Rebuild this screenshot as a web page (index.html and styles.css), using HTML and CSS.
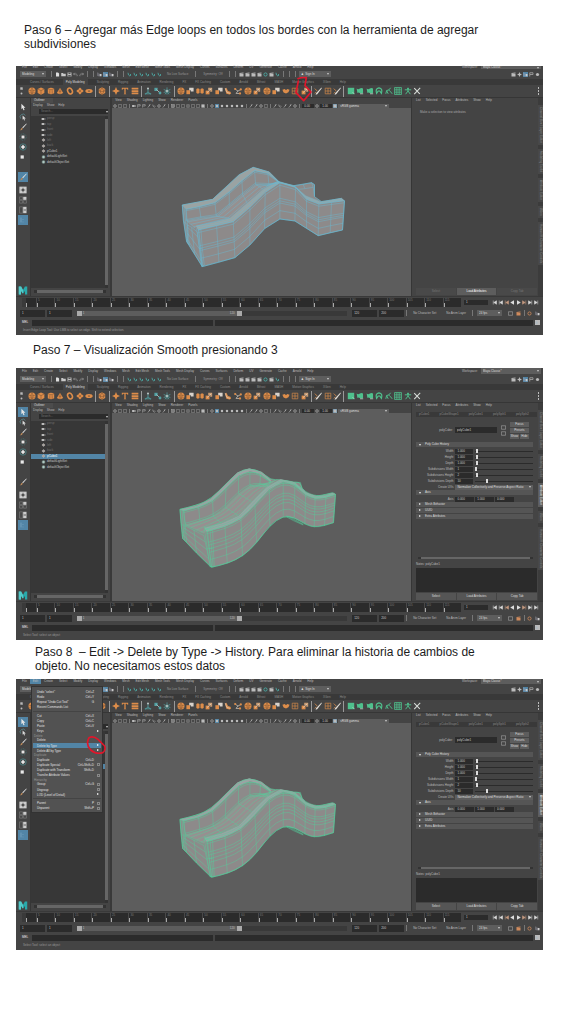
FILE: index.html
```html
<!DOCTYPE html>
<html lang="es">
<head>
  <meta charset="UTF-8">
  <meta name="viewport" content="width=device-width, initial-scale=1">
  <title>Modelado de un puente - Pasos 6 a 8</title>
  <link rel="stylesheet" href="styles.css">
</head>
<body>
  <!-- icon sprite -->
  <svg class="sprite" aria-hidden="true">
    <symbol id="sphere" viewBox="0 0 10 10"><circle cx="5" cy="5" r="4.4" fill="currentColor"/><path d="M1 4q4 2 8 0M1.500 7q3.500 1.500 7 0M5 .6q-3 4 0 8.800M5 .6q3 4 0 8.800" fill="none" stroke="#6b4a31" stroke-width=".5"/></symbol>
    <symbol id="cube" viewBox="0 0 10 10"><path d="M5 .5l4.200 2v5L5 9.600.8 7.500v-5z" fill="currentColor"/><path d="M.8 2.500L5 4.500l4.200-2M5 4.500v5" fill="none" stroke="#6b4a31" stroke-width=".6"/></symbol>
    <symbol id="cylinder" viewBox="0 0 10 10"><path d="M1 2.200q4-2.800 8 0v5.600q-4 2.800-8 0z" fill="currentColor"/><path d="M1 2.200q4 2.600 8 0M3.500 4v5M6.500 4v5" fill="none" stroke="#6b4a31" stroke-width=".6"/></symbol>
    <symbol id="cone" viewBox="0 0 10 10"><path d="M5 .8l4 6.800q-4 2.800-8 0z" fill="currentColor"/><path d="M5 1v8M3 5q2 1 4 0" fill="none" stroke="#6b4a31" stroke-width=".6"/></symbol>
    <symbol id="torus" viewBox="0 0 10 10"><ellipse cx="5" cy="5" rx="2.800" ry="3.800" transform="rotate(-25 5 5)" fill="none" stroke="currentColor" stroke-width="2"/></symbol>
    <symbol id="plane" viewBox="0 0 10 10"><path d="M5 .6L9.600 5 5 9.400.4 5z" fill="currentColor"/><path d="M2.700 2.700l4.600 4.600M7.300 2.700L2.700 7.300" stroke="#6b4a31" stroke-width=".6"/></symbol>
    <symbol id="disk" viewBox="0 0 10 10"><ellipse cx="5" cy="5" rx="4.600" ry="2.600" fill="currentColor"/><ellipse cx="5" cy="5" rx="1.500" ry=".7" fill="#5b4a3e"/></symbol>
    <symbol id="platonic" viewBox="0 0 10 10"><path d="M5 .4l4 2.200v4.800L5 9.600 1 7.400V2.600z" fill="currentColor"/><path d="M5 .4L2.500 5.500h5zM2.500 5.500L5 9.600l2.500-4.100M1 2.600l1.500 2.900M9 2.600L7.500 5.500" fill="none" stroke="#6b4a31" stroke-width=".6"/></symbol>
    <symbol id="star" viewBox="0 0 10 10"><path d="M5 0l1.500 3.500L10 5 6.500 6.500 5 10 3.500 6.500 0 5l3.500-1.500z" fill="currentColor"/></symbol>
    <symbol id="type" viewBox="0 0 10 10"><path d="M1 1h8v2.500h-.9L7.500 2.200H5.800v6.300l1 .5H3.200l1-.5V2.200H2.500L1.900 3.500H1z" fill="currentColor"/></symbol>
    <symbol id="layers" viewBox="0 0 10 10"><path d="M.8 1h8.400v2.200H.8zM.8 4h8.400v2.200H.8zM.8 7h8.400v2.200H.8z" fill="currentColor"/></symbol>
    <symbol id="figure" viewBox="0 0 10 10"><circle cx="5" cy="2" r="1.300" fill="#b8c2c2"/><path d="M5 3v3.500M5 6.200L1.500 9M5 6.200L8.500 9M1 8.500h8" fill="none" stroke="currentColor" stroke-width="1"/></symbol>
    <symbol id="joints" viewBox="0 0 10 10"><rect x=".5" y="1" width="4" height="4" fill="currentColor"/><path d="M3 3l5 5" stroke="#b8c2c2" stroke-width="1"/><circle cx="7.500" cy="7.500" r="1.800" fill="currentColor"/></symbol>
    <symbol id="burst" viewBox="0 0 10 10"><path d="M5 .5v9M.8 3l8.400 4M.8 7l8.400-4M2.500 9.200L5 5l2.500 4.200" fill="none" stroke="currentColor" stroke-width=".9"/><circle cx="5" cy="5" r="1.600" fill="#aab6b4"/></symbol>
    <symbol id="combine" viewBox="0 0 10 10"><path d="M.5 4h4.500v5H.5z" fill="currentColor"/><path d="M4 1h5.500v4.500H6V4H4z" fill="#d8d2cb"/></symbol>
    <symbol id="separate" viewBox="0 0 10 10"><path d="M.4 2.500l2-1 2 1v5l-2 1-2-1zM5.600 2.500l2-1 2 1v5l-2 1-2-1z" fill="currentColor"/></symbol>
    <symbol id="extrude" viewBox="0 0 10 10"><path d="M.8 4.500h4.800v4.700H.8z" fill="currentColor"/><path d="M4 1h5v5H6.500V3.700H4z" fill="#c89b72"/><path d="M2.500 7L7.800 2.200" stroke="#e8e0d8" stroke-width=".8"/></symbol>
    <symbol id="bevel" viewBox="0 0 10 10"><path d="M1 2l2-1 2 4 3 1 1 2-2 1.500-4-1z" fill="currentColor"/><path d="M1.500 1.500l2 5 4 1.500" fill="none" stroke="#d8d2cb" stroke-width=".7"/></symbol>
    <symbol id="bridge" viewBox="0 0 10 10"><path d="M1 2.500l4 2.500 4-2M5 5L2.500 8l6 .3" fill="none" stroke="#d0c8c0" stroke-width=".9"/><circle cx="1.500" cy="2.500" r="1.400" fill="currentColor"/><circle cx="8.500" cy="3" r="1.400" fill="currentColor"/><circle cx="7.500" cy="8" r="1.400" fill="currentColor"/></symbol>
    <symbol id="leaf" viewBox="0 0 10 10"><path d="M.5 3.500l3-1L5 4l1.500-1.500 3 1L8 6.500 5 8 2 7z" fill="currentColor"/></symbol>
    <symbol id="grid" viewBox="0 0 10 10"><path d="M1.500 1.500h7v7h-7zM5 1.500v7M1.500 5h7" fill="none" stroke="currentColor" stroke-width=".8"/></symbol>
    <symbol id="knife" viewBox="0 0 10 10"><path d="M1 2l3 3M1 8l2-2" stroke="currentColor" stroke-width="1"/><path d="M9.300.7l.5 1L4 9l-2 .6.600-1.800z" fill="#e2ddd6"/></symbol>
    <symbol id="tile" viewBox="0 0 10 10"><rect x="1" y="1" width="8" height="8" fill="currentColor"/><path d="M7 6.500L9.500 9" stroke="#d5e0d8" stroke-width=".8"/></symbol>
    <symbol id="wave" viewBox="0 0 10 10"><path d="M.8 2q2 1.500 4 0t4 0v5.500q-2 1.500-4 0t-3 0z" fill="currentColor"/><path d="M5 8.500h4" stroke="#d5e0d8" stroke-width=".8"/></symbol>
    <symbol id="tripod" viewBox="0 0 10 10"><path d="M2 8q-2-6 3-7 5 1 3 7L6 5H4z" fill="none" stroke="currentColor" stroke-width="1.500"/></symbol>
    <symbol id="curve" viewBox="0 0 10 10"><path d="M1 8.500l1-4 3-1 2-2.500M5 4l2 2 2 2.500M2 4.500l2 4" fill="none" stroke="currentColor" stroke-width="1.200"/></symbol>
    <symbol id="weave" viewBox="0 0 10 10"><rect x=".8" y=".8" width="8.400" height="8.400" fill="none" stroke="currentColor"/><path d="M3 1v8M5 1v8M7 1v8M1 3h8M1 5h8M1 7h8" stroke="currentColor" stroke-width=".7"/></symbol>
    <symbol id="runner" viewBox="0 0 10 10"><path d="M1 3.500h8M5 1v4M5 5L2 9M5 5l3 4" fill="none" stroke="currentColor" stroke-width="1.200"/><circle cx="5" cy="2" r="1.200" fill="currentColor"/></symbol>
    <symbol id="cross" viewBox="0 0 10 10"><path d="M1.500 1.500l7 7M9 1L1.500 9" stroke="#d8ddd9" stroke-width="1.300"/></symbol>
    <symbol id="arrow" viewBox="0 0 10 10"><path d="M3 .8l5 5H5.800l1.200 2.800-1.400.6-1.200-2.800L3 7.800z" fill="#e6e6e6"/></symbol>
    <symbol id="lasso" viewBox="0 0 10 10"><path d="M2 7q-2-3 1-5t5 1" fill="none" stroke="#5f9aa0" stroke-width=".8"/><path d="M4.500 3l4 4H6.800l.6 2-1 .3-.8-2-1.100 1z" fill="#ddd"/></symbol>
    <symbol id="brush" viewBox="0 0 10 10"><path d="M9.200.6l.4.8L5 6.500 4 5.600z" fill="#e2e2e2"/><path d="M4.200 6q-2 0-2 2L.8 9q3 .6 4-2.200z" fill="currentColor"/></symbol>
    <symbol id="move" viewBox="0 0 10 10"><circle cx="5" cy="5" r="4" fill="none" stroke="#477f83" stroke-width=".7" stroke-dasharray="2 1"/><rect x="3.200" y="3.200" width="3.600" height="3.600" fill="#e4e4e4"/></symbol>
    <symbol id="rotate" viewBox="0 0 10 10"><circle cx="5" cy="5" r="4" fill="none" stroke="#4a8b8f" stroke-width=".9"/><path d="M5 2.300L7.700 5 5 7.700 2.300 5z" fill="#e8e8e8"/></symbol>
    <symbol id="scale" viewBox="0 0 10 10"><rect x="2" y="3" width="4" height="4" fill="#e8e8e8"/></symbol>
    <symbol id="single" viewBox="0 0 10 10"><rect x=".5" y=".8" width="9" height="8.400" fill="#ccc"/><path d="M5 2.200v5.600M2.200 5h5.600" stroke="#444" stroke-width="1"/><circle cx="5" cy="5" r="1.300" fill="#444"/></symbol>
    <symbol id="quad" viewBox="0 0 10 10"><path d="M.7 1h3.800v3.500H.7zM.7 5.500h3.800V9H.7zM5.500 5.500h3.800V9H5.500z" fill="#484848" stroke="#999" stroke-width=".5"/><path d="M5.300 1h4v3.800h-4z" fill="#ccc"/></symbol>
    <symbol id="split" viewBox="0 0 10 10"><path d="M.7 1h3.800v8H.7z" fill="#484848" stroke="#999" stroke-width=".5"/><path d="M5.200 1h4.200v8H5.200z" fill="#ccc"/><path d="M5.800 5h3M2 5h1.500" stroke="#444" stroke-width="1"/></symbol>
    <symbol id="list" viewBox="0 0 10 10"><path d="M2.500 2v6M5 4v1M5 7v1" stroke="#8eb6d0" stroke-width=".7"/></symbol>
    <symbol id="logo" viewBox="0 0 10 10"><path d="M.3.600h2.600L5 4.400 7.100.6h2.600v8.800H7.200V5.300L5.600 8H4.400L2.800 5.300v4.100H.3z" fill="#29a9ab"/><path d="M.3.600h2.600L5 4.400V8h-.6L2.800 5.300v4.100H.3z" fill="#53c9c8"/></symbol>
    <symbol id="file" viewBox="0 0 10 10"><path d="M2 .8h4l2.200 2.200v6.200H2z" fill="#ddd"/></symbol>
    <symbol id="folder" viewBox="0 0 10 10"><path d="M.5 2h3.500l1 1.500h4.500v5h-9z" fill="#c9c9c9"/></symbol>
    <symbol id="save" viewBox="0 0 10 10"><path d="M1 1h8v8H1z" fill="#bbb"/><path d="M3 1.500h4v2.500H3zM2.500 6h5v3h-5z" fill="#555"/></symbol>
    <symbol id="undo" viewBox="0 0 10 10"><path d="M3.500 1.500L1 4l2.500 2.500M1 4h5.500q3 1 1.500 4.500" fill="none" stroke="#aaa" stroke-width="1.200"/></symbol>
    <symbol id="redo" viewBox="0 0 10 10"><path d="M6.500 1.500L9 4 6.500 6.500M9 4H3.500Q.5 5 2 8.500" fill="none" stroke="#aaa" stroke-width="1.200"/></symbol>
    <symbol id="magnet" viewBox="0 0 10 10"><path d="M2 1.500l1 4.500q3 4 5 0L6 4" fill="none" stroke="currentColor" stroke-width="1.500"/></symbol>
    <symbol id="nodes" viewBox="0 0 10 10"><path d="M1.500 1v6.500h5M2 4l6 1" fill="none" stroke="#aab" stroke-width="1"/><rect x="5.500" y="4" width="3.500" height="4.500" fill="#ccc"/></symbol>
    <symbol id="clap" viewBox="0 0 10 10"><path d="M1 3.500h8V9H1zM1 2l8-1v1.500L1 3.500z" fill="currentColor"/></symbol>
    <symbol id="ring" viewBox="0 0 10 10"><circle cx="5" cy="5" r="3.200" fill="none" stroke="currentColor" stroke-width="1.600"/></symbol>
    <symbol id="dot" viewBox="0 0 10 10"><circle cx="5" cy="5" r="3.200" fill="currentColor"/></symbol>
    <symbol id="frame" viewBox="0 0 10 10"><path d="M.8 1.500h8.400v7H.8z" fill="none" stroke="currentColor" stroke-width="1"/></symbol>
    <symbol id="camera" viewBox="0 0 10 10"><path d="M.3 2.500h6v5h-6zM6.500 4.500L9.500 3v4L6.500 5.500z" fill="currentColor"/></symbol>
    <symbol id="flag" viewBox="0 0 10 10"><path d="M1.500 9V1.500h6.500v3.500H2" fill="none" stroke="currentColor" stroke-width="1.300"/></symbol>
    <symbol id="pen" viewBox="0 0 10 10"><path d="M8.500 1L2 9M6 1v4" stroke="currentColor" stroke-width="1.500"/></symbol>
    <symbol id="set" viewBox="0 0 10 10"><circle cx="5" cy="5" r="4.500" fill="#7d9690"/><circle cx="5" cy="5" r="2.200" fill="#b9cbc6"/></symbol>
    <symbol id="play" viewBox="0 0 10 10"><path d="M2 .5L9.500 5 2 9.500z" fill="currentColor"/></symbol>
    <symbol id="back" viewBox="0 0 10 10"><path d="M8 .5L.5 5 8 9.500z" fill="currentColor"/></symbol>
    <symbol id="next" viewBox="0 0 10 10"><path d="M1 1.500L6.500 5 1 8.500zM7.500 1v8" fill="currentColor" stroke="currentColor" stroke-width="1"/></symbol>
    <symbol id="prev" viewBox="0 0 10 10"><path d="M9 1.500L3.500 5 9 8.500zM2.500 1v8" fill="currentColor" stroke="currentColor" stroke-width="1"/></symbol>
  </svg>

  <main>
    <h2 class="step">Paso 6 – Agregar más Edge loops en todos los bordes con la herramienta de agregar subdivisiones</h2>
    <div class="maya" data-step="loops"></div>

    <h2 class="step step-smooth">Paso 7 – Visualización Smooth presionando 3</h2>
    <div class="maya" data-step="smooth"></div>

    <h2 class="step step-history">Paso 8&nbsp; – Edit -&gt; Delete by Type -&gt; History. Para eliminar la historia de cambios de objeto. No necesitamos estos datos</h2>
    <div class="maya" data-step="history"></div>
  </main>

  <script src="script.js"></script>
</body>
</html>
```

FILE: styles.css
```css
* { box-sizing: border-box; }
body { margin: 0; background: #fff; color: #1c1c1c; font-family: "Liberation Sans", Arial, sans-serif; }
main { padding: 23px 33px 72px 16px; }
ul { margin: 0; padding: 0; list-style: none; }
svg { display: block; }
.sprite { display: none; }

.step { margin: 0 24px 15px 8px; font-size: 12px; line-height: 14px; font-weight: 400; }
.step-smooth { margin: 8px 0 11px 17px; }
.step-history { margin: 5px 40px 6px 19px; }

/* application window */
.maya { position: relative; background: #444; color: #bdbdbd; font: 3px/5px "Liberation Sans", Arial, sans-serif; }
.maya button, .maya input, .maya select, .maya textarea {
  display: block; min-width: 0; margin: 0; padding: 0; border: 0; border-radius: 0;
  background: none; color: inherit; font: inherit; appearance: none;
}
.maya input, .maya textarea { background: #2b2b2b; padding: 0 2px; color: #c8c8c8; }
.maya textarea { resize: none; }
.maya select { background: #5d5d5d; padding: 0 2px; color: #ddd; }
.maya label { display: flex; align-items: center; }
.ic { width: 5px; height: 5px; flex: none; color: #bbb; }
.sep { width: 1px; height: 6px; background: #777; flex: none; }
.drop { position: relative; }
.drop::after { content: ""; position: absolute; right: 2px; top: 50%; margin-top: -1px; border: 1px solid transparent; border-top: 2px solid #ccc; pointer-events: none; }
.drop select { width: 100%; height: 6px; }
.maya .on { background: #5285a6; }

.menubar { display: flex; align-items: center; justify-content: space-between; height: 6px; }
.is-loops .menubar { height: 3px; line-height: 3px; }
.is-loops .menubar select { height: 3px; }
.is-history .menubar { height: 5px; }
.is-history .menubar select { height: 5px; }
.menubar nav { display: flex; align-items: center; padding-left: 3px; }
.menubar nav button { padding: 0 3px; }
.menubar .workspace { width: 15%; margin-right: 2px; gap: 3px; }
.workspace .drop { flex: 1; }

.status { display: flex; align-items: center; gap: 1px; height: 10px; padding: 0 3px 0 4px; }
.status .sep { margin: 0 2px; }
.status .mode { width: 5%; margin-right: 2px; }
.status .grow { flex: 1; }
.status .signin { width: 6%; }
.status .teal { color: #4db6b0; }
.note { padding: 0 4px; color: #999; white-space: nowrap; }

.tabs { display: flex; gap: 9px; height: 6px; padding-left: 14px; background: #393939; }
.tabs button { color: #8a8a8a; }
.tabs .active { background: #444; color: #ddd; padding: 0 3px; }
.shelf { display: flex; align-items: center; height: 13px; border-bottom: 1px solid #363636; }
.shelf-side { width: 11px; display: grid; justify-items: center; }
.shelf-side .ic { width: 3px; }
.icons { display: flex; align-items: center; width: 75%; color: #dd8d4a; }
.icons button { position: relative; flex: 5; }
.icons .ic { width: 8px; height: 8px; margin: auto; color: inherit; }
.icons .gap { flex: 2; }
.icons .gap::before { content: ""; display: block; width: 1px; height: 11px; margin: auto; background: #999; }
.icons .teal { color: #52a3a5; }
.icons .green { color: #4fc08d; }
.more { margin-left: auto; padding-right: 3px; }
.more i { display: block; width: 1px; height: 2px; margin: 1px; background: #bbb; }
.ink { position: absolute; fill: none; stroke: #e0162b; stroke-linejoin: round; stroke-linecap: round; pointer-events: none; z-index: 2; }
.ink-shelf { width: 18px; height: 26px; left: -6px; top: -11px; }
.ink-menu { width: 20px; height: 19px; right: -5px; top: -7px; }

.work { display: grid; grid-template-columns: 14px 15.6% 1fr 24.1% 5px; height: 198px; }

.toolbox { display: flex; flex-direction: column; padding: 4px 2px 0; }
.toolbox button { height: 10px; padding: 1px; }
.toolbox .ic { width: 8px; height: 8px; color: #b98759; }
.toolbox .last { margin-top: 10px; }
.toolbox .layouts { margin-top: 3px; }
.toolbox .logo { width: 10px; height: 9px; margin: auto 0 1px; }

.outliner { display: flex; flex-direction: column; border-left: 1px solid #363636; border-right: 2px solid #393939; min-width: 0; }
.outliner .title { align-self: flex-start; padding: 0 8px 0 3px; background: #4c4c4c; color: #ddd; }
.row-menu { display: flex; gap: 4px; padding-left: 2px; }
.search { height: 6px; padding: 0 2px 0 8px; margin: 1px 0; }
.search input { width: 100%; height: 5px; }
.tree { flex: 1; display: flex; margin-right: 2px; background: #373737; }
.tree ul { flex: 1; display: grid; grid-template-rows: repeat(9, 1fr); height: 49px; color: #6f6f6f; }
.tree li { display: flex; align-items: center; gap: 1px; padding-left: 10px; }
.tree .bright { color: #c8c8c8; }
.tree .on { color: #fff; }
.tree .ic { height: 4px; }
.bar-v { width: 3px; background: #666; border: solid #333; border-width: 3px 0; }
.bar-h { height: 3px; margin: 2px 4px 3px 3px; background: #666; border: solid #333; border-width: 0 3px; }

.viewport { display: flex; flex-direction: column; background: #5d5d5d; min-width: 0; }
.panel-menu { display: flex; gap: 5px; padding-left: 3px; background: #444; }
.panel-tools { display: flex; align-items: center; gap: 1px; height: 5px; padding-left: 1px; background: #444; }
.panel-tools .ic { width: 4px; height: 4px; }
.panel-tools .sep { height: 4px; margin: 0 1px; }
.panel-tools input { width: 12px; height: 4px; line-height: 4px; }
.panel-tools .drop { width: 17%; }
.panel-tools select { height: 4px; line-height: 4px; }
.mesh { flex: 1; width: 100%; min-height: 0; }

.attrs { display: flex; flex-direction: column; padding: 0 1px 1px 4px; border-left: 1px solid #363636; min-width: 0; }
.attrs .row-menu { gap: 5px; padding-left: 0; }
.message { margin: 7px 4px; color: #aaa; }
.node-tabs { display: flex; justify-content: space-between; margin-top: 4px; padding: 0 8px 0 3px; background: #393939; color: #888; }
.node { display: flex; align-items: center; height: 20px; margin: 3px 0 2px; padding-right: 8px; gap: 2px; }
.node label { flex: 1; justify-content: flex-end; gap: 2px; }
.node input { width: 52%; height: 6px; }
.node .pair { display: grid; gap: 1px; margin: 0 2px; }
.node .acts { display: grid; grid-template-columns: 1fr 1fr; gap: 1px; width: 17%; }
.node .acts button { background: #5d5d5d; color: #ddd; text-align: center; }
.node .acts .wide { grid-column: 1 / 3; }
.attrs .section { position: relative; height: 5px; margin: 0 4px 1px 0; padding-left: 9px; background: #555; color: #ddd; text-align: left; }
.section::before { content: ""; position: absolute; left: 3px; top: 2px; border: 1px solid transparent; border-top: 2px solid #eee; }
.section.closed::before { top: 1px; border: 1px solid transparent; border-left: 2px solid #eee; }
.field { display: grid; grid-template-columns: 32% 15% 1fr; gap: 2px; height: 6px; align-items: center; padding-right: 4px; }
.maya .field label { display: contents; }
.field span { text-align: right; white-space: nowrap; }
.field input { width: 100%; height: 5px; }
.field .slider { height: 1px; padding: 0; background: #2b2b2b; overflow: visible; }
.field .slider::-webkit-slider-thumb { appearance: none; width: 2px; height: 4px; background: #ddd; }
.field .drop { grid-column: 2 / 4; }
.field .drop select { height: 5px; }
.field .trio { grid-column: 2 / 4; display: grid; grid-template-columns: repeat(3, 1fr); gap: 1px; width: 75%; }
.fill { flex: 1; }
.attrs .bar-h { height: 2px; margin: 0 4px 3px 2px; flex: none; }
.maya .notes { display: block; }
.notes textarea { width: 100%; height: 24px; margin-top: 1px; }
.foot { display: grid; grid-template-columns: repeat(3, 1fr); gap: 1px; margin-top: 1px; }
.foot button { height: 7px; background: #555; color: #ddd; text-align: center; }
.is-loops .foot button { background: #494949; color: #777; }
.is-loops .foot .lit { background: #5d5d5d; color: #fff; }

.side { display: flex; flex-direction: column; gap: 4px; padding-top: 7px; background: #3c3c3c; color: #888; overflow: hidden; }
.side button { writing-mode: vertical-rl; width: 5px; background: #484848; padding: 2px 0; white-space: nowrap; }
.side .active { background: #5d5d5d; color: #eee; }

.timeline { display: flex; align-items: center; height: 12px; padding: 0 4px 0 6px; border-top: 1px solid #393939; }
.ticks { flex: 1; display: flex; height: 9px; background: #2b2b2b; color: #777; }
.ticks span { flex: 1; border-left: 1px solid #484848; padding-left: 1px; line-height: 4px;
  background: linear-gradient(#aaa, #aaa) 0 100% / 1px 4px no-repeat; }
.ticks .now { flex: 0 0 14px; border-left: 4px solid #3a3a3a; }
.timeline input { width: 24px; height: 5px; margin: 0 4px 0 3px; }
.play { display: flex; gap: 1px; }
.play .ic { color: #ddd; }
.play .key { color: #c79a80; }

.range { display: flex; align-items: center; gap: 2px; height: 10px; padding: 0 2px 0 4px; }
.range input { width: 25px; height: 7px; }
.track { flex: 1; height: 5px; margin: 0 3px; background: #393939; }
.track div { display: flex; justify-content: space-between; align-items: center; width: 61%; height: 5px; background: #5d5d5d; }
.track b { width: 5px; height: 5px; background: #aaa; }
.track em { margin: auto 2px auto auto; font-style: normal; }
.range .note { color: #bbb; }
.range .drop { width: 25px; margin: 0 4px 0 2px; }
.range .ic { margin-right: 1px; }
.range .orange { color: #cf8a5c; }

.command { display: flex; align-items: center; gap: 2px; height: 9px; padding: 0 3px 0 2px; }
.command label { flex: 38 0 0; }
.command label span { width: 14px; text-align: center; color: #eee; }
.command input { flex: 1; height: 6px; }
.command .output { flex: 61 0 0; }
.command .ic { background: #bbb; }
.help { height: 8px; padding: 1px 7px; color: #999; }

/* Edit menu */
.edit-menu { position: absolute; z-index: 1; left: 15px; top: 7px; width: 72px; height: 127px; padding: 2px 1px 1px;
  display: flex; flex-direction: column; background: #525252; border: 1px solid #333; color: #e2e2e2; line-height: 4px; }
.edit-menu li { flex: 11 0 0; min-height: 0; display: flex; align-items: center; }
.edit-menu li.head { flex-grow: 8; color: #999; padding-left: 1px; }
.edit-menu li.line { flex-grow: 7; }
.edit-menu li.line::before { content: ""; flex: 1; height: 1px; background: #444; }
.edit-menu button { position: relative; flex: 1; height: 5px; display: flex; align-items: center; padding: 0 2px 0 4px; white-space: nowrap; }
.edit-menu kbd { margin-left: auto; margin-right: 5px; font: inherit; }
.edit-menu .opt { position: absolute; right: 1px; top: 1px; width: 3px; height: 3px; border: 1px solid #888; }
.edit-menu .sub { position: absolute; right: 1px; top: 1px; border: 1px solid transparent; border-left: 2px solid #fff; }
```

FILE: script.js
```js
const icon = (id, cls = '') => `<svg class="ic ${cls}" aria-hidden="true"><use href="#${id}"/></svg>`;
const buttons = names => names.map(n => `<button>${n}</button>`).join('');
const sep = '<span class="sep"></span>';
const select = (label, value) => `<div class="drop"><select aria-label="${label}"><option>${value}</option></select></div>`;

const menus = ['File', 'Edit', 'Create', 'Select', 'Modify', 'Display', 'Windows', 'Mesh', 'Edit Mesh', 'Mesh Tools',
  'Mesh Display', 'Curves', 'Surfaces', 'Deform', 'UV', 'Generate', 'Cache', 'Arnold', 'Help'];

const shelfTabs = ['Curves / Surfaces', 'Poly Modeling', 'Sculpting', 'Rigging', 'Animation', 'Rendering', 'FX', 'FX Caching',
  'Custom', 'Arnold', 'Bifrost', 'MASH', 'Motion Graphics', 'XGen', 'Help'];

const shelf = [
  ['', 'sphere cube cylinder cone torus plane disk'],
  ['', 'platonic'],
  ['', 'star type layers'],
  ['teal', 'figure joints burst'],
  ['', 'sphere combine separate extrude combine bevel bridge sphere extrude sphere combine leaf grid extrude'],
  ['', 'knife grid knife'],
  ['green', 'tile wave wave tripod curve weave runner cross']
];

const nodes = [['camera', 'persp'], ['camera', 'top'], ['camera', 'front'], ['camera', 'side'], ['plane', 'left'],
  ['plane', 'back'], ['plane', 'pCube1'], ['set', 'defaultLightSet'], ['set', 'defaultObjectSet']];

const editMenu = [
  ['Undo "select"', 'Ctrl+Z'], ['Redo', 'Ctrl+Y'], ['Repeat "Undo Cut Tool"', 'G'], ['Recent Commands List'], '-',
  ['Cut', 'Ctrl+X'], ['Copy', 'Ctrl+C'], ['Paste', 'Ctrl+V'], ['Keys', '', 'sub'], 'Delete',
  ['Delete'], ['Delete by Type', '', 'sub'], ['Delete All by Type', '', 'sub'], 'Duplicate',
  ['Duplicate', 'Ctrl+D'], ['Duplicate Special', 'Ctrl+Shift+D', 'opt'], ['Duplicate with Transform', 'Shift+D'],
  ['Transfer Attribute Values', '', 'opt'], 'Hierarchy',
  ['Group', 'Ctrl+G', 'opt'], ['Ungroup', '', 'opt'], ['LOD (Level of Detail)', '', 'sub'], '-',
  ['Parent', 'P', 'opt'], ['Unparent', 'Shift+P', 'opt']
];

// each surface is a strip between two edges, cut by loops at the given fractions
const meshes = {
  hard: {
    line: '#69b9d2',
    outline: [[37,165],[128,148],[208,74],[250,52],[298,66],[330,98],[372,107],[425,98],[434,104],[434,140],[455,155],[515,145],[524,153],
      [518,240],[445,257],[375,213],[330,207],[285,235],[240,285],[195,323],[97,350],[50,275],[40,210]],
    strips: [
      { a: [[85,240],[140,227],[190,215],[240,172],[286,127],[330,98],[377,112],[410,148],[447,162],[485,157],[524,152]],
        b: [[97,350],[147,337],[195,323],[240,285],[284,236],[330,207],[375,213],[410,235],[445,257],[481,248],[518,240]], cuts: [0,.07,.43,.5,.56,.77,1], ribs: 1 },
      { a: [[78,228],[132,217],[180,205],[232,160],[280,118],[325,94],[372,107],[408,138],[452,155],[485,150],[515,145]],
        b: [[85,240],[140,227],[190,215],[240,172],[286,127],[330,98],[377,112],[410,148],[447,162],[485,157],[524,152]], cuts: [0,.5,1], ribs: 0 },
      { a: [[48,178],[88,170],[135,158],[178,126],[216,92],[254,62],[294,70],[328,97]],
        b: [[50,212],[93,204],[139,198],[178,166],[218,133],[257,103],[297,104],[320,100]], cuts: [0,.12,.9,1], ribs: 1 },
      { a: [[37,165],[82,157],[128,148],[168,112],[208,74],[250,52],[298,66],[330,98]],
        b: [[48,178],[88,170],[135,158],[178,126],[216,92],[254,62],[294,70],[328,97]], cuts: [0,1], ribs: 0 },
      { a: [[50,212],[139,198],[218,133],[257,103],[290,108]],
        b: [[75,234],[180,205],[232,160],[280,118],[325,94]], cuts: [.15,.5,.85], ribs: 1 },
      { a: [[37,165],[42,215],[50,275]], b: [[48,178],[53,225],[58,285]], cuts: [0,.5,1], ribs: 1 },
      { a: [[53,225],[65,232],[82,246]], b: [[52,275],[74,312],[97,350]], cuts: [0,.15,.5,.85,1], ribs: 1 },
      { a: [[80,236],[88,295],[95,350]], b: [[93,240],[97,295],[103,345]], cuts: [0,.5,1], ribs: 1 },
      { a: [[372,107],[400,103],[425,98],[434,104]], b: [[385,118],[405,116],[430,112],[434,140]], cuts: [0,1], ribs: 1 }
    ]
  },
  smooth: {
    line: '#54cf9c',
    outline: [[30,163],[85,150],[125,130],[165,90],[205,50],[238,40],[275,50],[303,75],[330,73],[375,82],[392,82],[395,100],[418,120],[445,124],[490,112],[497,118],[497,118],
      [491,203],[491,203],[440,217],[410,210],[375,188],[340,182],[300,210],[260,265],[220,303],[175,325],[125,337],[125,337],[80,295],[38,250],[38,250],[33,205]],
    strips: [
      { a: [[110,230],[165,215],[213,192],[255,150],[298,103],[340,80],[375,90],[407,120],[436,131],[468,128],[497,118]],
        b: [[125,337],[172,325],[218,304],[260,262],[300,212],[340,182],[373,187],[405,208],[433,217],[464,213],[490,203]], cuts: [0,.06,.3,.38,.48,.58,.78,1], ribs: 1 },
      { a: [[103,218],[155,205],[206,182],[246,140],[290,95],[332,73],[375,82],[408,112],[440,123],[468,121],[488,113]],
        b: [[110,230],[165,215],[213,192],[255,150],[298,103],[340,80],[375,90],[407,120],[436,131],[468,128],[497,118]], cuts: [0,.5,1], ribs: 0 },
      { a: [[40,168],[86,157],[128,138],[168,100],[206,62],[240,49],[272,57],[302,80]],
        b: [[46,210],[90,198],[130,184],[166,157],[206,116],[240,92],[270,87],[295,92]], cuts: [0,.12,.88,1], ribs: 1 },
      { a: [[30,163],[80,152],[122,132],[163,92],[203,52],[238,40],[275,50],[303,75]],
        b: [[40,168],[86,157],[128,138],[168,100],[206,62],[240,49],[272,57],[302,80]], cuts: [0,1], ribs: 0 },
      { a: [[46,210],[130,184],[166,157],[206,116],[240,92],[280,88]],
        b: [[102,235],[155,205],[206,182],[246,140],[290,95],[320,75]], cuts: [.1,.3,.6,.85], ribs: 1 },
      { a: [[30,163],[35,210],[38,250]], b: [[42,168],[46,210],[50,262]], cuts: [0,.5,1], ribs: 1 },
      { a: [[44,212],[72,225],[102,242]], b: [[38,250],[80,295],[122,336]], cuts: [0,.2,.45,.75,1], ribs: 1 },
      { a: [[103,218],[112,280],[120,335]], b: [[128,228],[130,280],[133,334]], cuts: [0,.35,.7,1], ribs: 1 },
      { a: [[350,182],[370,190],[400,208]], b: [[350,186],[368,197],[400,210]], cuts: [0,.5,1], ribs: 0 },
      { a: [[375,82],[392,82]], b: [[380,96],[395,99]], cuts: [0,1], ribs: 1 }
    ]
  }
};

function polyline(pts, smooth) {
  let d = `M${pts[0]}`;
  if (!smooth) return d + pts.slice(1).map(p => `L${p}`).join('');
  for (let i = 1; i < pts.length - 1; i++) {
    const end = i === pts.length - 2 ? pts[i + 1] : [(pts[i][0] + pts[i + 1][0]) / 2, (pts[i][1] + pts[i + 1][1]) / 2];
    d += `Q${pts[i]} ${end}`;
  }
  return pts.length === 2 ? d + `L${pts[1]}` : d;
}

function mesh(name) {
  const { line, outline, strips } = meshes[name];
  const smooth = name === 'smooth';
  let wires = '';
  strips.forEach(({ a, b, cuts, ribs }) => {
    cuts.forEach(t => {
      const pts = a.map((p, i) => [p[0] + (b[i][0] - p[0]) * t, p[1] + (b[i][1] - p[1]) * t]);
      wires += polyline(pts, smooth);
    });
    if (ribs) a.forEach((p, i) => { wires += `M${p}L${b[i]}`; });
  });
  const face = (s, color) => `<path d="${polyline(s.a.concat([...s.b].reverse()), false)}Z" fill="${color}"/>`;
  return `<svg class="mesh" viewBox="-174 -126 897 564" role="img" aria-label="pCube1">
    <path d="${polyline(outline, smooth)}Z" fill="#8d8a8a" stroke="${line}" stroke-width="2"/>
    ${face(strips[4], '#969090')}${face(strips[1], '#9aa3a3')}${face(strips[3], '#9aa3a3')}
    <path d="${wires}" fill="none" stroke="${line}" stroke-width="2" stroke-opacity=".65"/>
  </svg>`;
}

function shelfIcons(step) {
  return shelf.map(([cls, ids], g) => ids.split(' ').map((id, i) => {
    const ink = step === 'loops' && g === 4 && i === 13
      ? '<svg class="ink ink-shelf" viewBox="0 0 54 78"><path d="M12 8q10-5 25-3l-4 24 18 19-22 26L6 50l7-35" stroke-width="5"/></svg>' : '';
    return `<button class="${cls}" aria-label="${id}">${icon(id)}${ink}</button>`;
  }).join('')).join('<span class="gap"></span>');
}

function editItems() {
  return editMenu.map(item => {
    if (item === '-') return '<li class="line"></li>';
    if (typeof item === 'string') return `<li class="head">${item}</li>`;
    const [name, key = '', mark] = item;
    const hit = name === 'Delete by Type';
    const ink = hit ? '<svg class="ink ink-menu" viewBox="0 0 60 57"><path d="M9 5Q22-1 36 10l20 20q4 14-6 20-20 6-36-8Q-2 25 9 5z" stroke-width="5"/></svg>' : '';
    return `<li><button class="${hit ? 'on' : ''}">${name}<kbd>${key}</kbd>${mark ? `<i class="${mark}"></i>` : ''}${ink}</button></li>`;
  }).join('');
}

function attributeEditor(step) {
  const head = `<div class="row-menu">${buttons(['List', 'Selected', 'Focus', 'Attributes', 'Show', 'Help'])}</div>`;
  const foot = '<div class="foot"><button>Select</button><button class="lit">Load Attributes</button><button>Copy Tab</button></div>';
  if (step === 'loops') {
    return `${head}<p class="message">Make a selection to view attributes</p><div class="fill"></div>${foot}`;
  }
  const rows = [['Width', '1.000', 1], ['Height', '1.000', 1], ['Depth', '1.000', 1],
    ['Subdivisions Width', '1', 0], ['Subdivisions Height', '2', 2], ['Subdivisions Depth', '10', 19]];
  return `${head}
    <div class="node-tabs">${buttons(['pCube1', 'pCubeShape1', 'polyCube1', 'polySplit1', 'polySplit2'])}</div>
    <div class="node">
      <label>polyCube: <input value="polyCube1"></label>
      <div class="pair">${icon('frame')}${icon('frame')}</div>
      <div class="acts"><button class="wide">Focus</button><button class="wide">Presets</button><button>Show</button><button>Hide</button></div>
    </div>
    <button class="section">Poly Cube History</button>
    ${rows.map(([n, v, p]) => `<div class="field"><label><span>${n}</span><input value="${v}"></label><input class="slider" type="range" value="${p}" aria-label="${n}"></div>`).join('')}
    <div class="field"><span>Create UVs</span>${select('Create UVs', 'Normalize Collectively and Preserve Aspect Ratio')}</div>
    <button class="section">Axis</button>
    <div class="field"><span>Axis</span><div class="trio"><input value="0.000" aria-label="Axis X"><input value="1.000" aria-label="Axis Y"><input value="0.000" aria-label="Axis Z"></div></div>
    <button class="section closed">Mesh Behavior</button>
    <button class="section closed">UUID</button>
    <button class="section closed">Extra Attributes</button>
    <div class="fill"></div>
    <div class="bar-h"></div>
    <label class="notes">Notes: polyCube1<textarea></textarea></label>
    ${foot}`;
}

function render(el) {
  const step = el.dataset.step;
  const picked = step !== 'loops';
  el.classList.add('is-' + step);
  const panelIcons = 'ring frame frame | camera flag flag pen magnet ring pen | weave frame frame grid frame frame tile | ring * dot dot dot dot dot | pen pen ring frame | pen magnet pen pen ring |';

  el.innerHTML = `
    <div class="menubar">
      <nav>${menus.map(m => `<button class="${step === 'history' && m === 'Edit' ? 'on' : ''}">${m}</button>`).join('')}</nav>
      <label class="workspace">Workspace: <span class="drop"><select><option>Maya Classic*</option></select></span></label>
    </div>
    ${step === 'history' ? `<ul class="edit-menu">${editItems()}</ul>` : ''}
    <div class="status">
      <div class="mode">${select('Menu set', 'Modeling')}</div>${sep}
      ${['file', 'folder', 'save', 'undo', 'redo'].map(i => icon(i)).join('')}${sep}${sep}
      ${icon('nodes')}${icon('nodes', 'on')}${icon('nodes')}${sep}${sep}
      ${icon('magnet', 'teal').repeat(6)}<span class="note">No Live Surface</span>${sep}
      <span class="note">Symmetry: Off</span>${sep}${sep}
      ${icon('clap').repeat(4)}${icon('ring', 'teal')}${icon('clap')}${icon('magnet', 'teal')}${sep}${sep}${sep}
      <div class="signin">${select('Account', '♟ Sign In')}</div>
      <span class="grow"></span>
      ${icon('clap')}${icon('star')}${icon('nodes', 'on')}${icon('flag')}${icon('dot')}
    </div>
    <div class="tabs">${shelfTabs.map(t => `<button class="${t === 'Poly Modeling' ? 'active' : ''}">${t}</button>`).join('')}</div>
    <div class="shelf">
      <div class="shelf-side">${icon('tile')}${icon('dot')}</div>
      <div class="icons">${shelfIcons(step)}</div>
      <div class="more"><i></i><i></i><i></i></div>
    </div>
    <div class="work">
      <div class="toolbox">
        ${['arrow', 'lasso', 'brush', 'move', 'rotate', 'scale'].map((t, i) => `<button class="${picked && i === 0 ? 'on' : ''}" aria-label="${t}">${icon(t)}</button>`).join('')}
        <button class="last ${picked ? '' : 'on'}" aria-label="last tool">${icon('brush')}</button>
        <button class="layouts" aria-label="single view">${icon('single')}</button>
        <button aria-label="four views">${icon('quad')}</button>
        <button aria-label="split view">${icon('split')}</button>
        <button class="on" aria-label="outliner view">${icon('list')}</button>
        ${icon('logo', 'logo')}
      </div>
      <div class="outliner">
        <span class="title">Outliner</span>
        <div class="row-menu">${buttons(['Display', 'Show', 'Help'])}</div>
        <div class="search drop"><input placeholder="Search..." aria-label="Search"></div>
        <div class="tree">
          <ul>${nodes.map(([i, n], k) => `<li class="${k > 5 ? 'bright' : ''} ${picked && n === 'pCube1' ? 'on' : ''}">${icon(i)}${n}</li>`).join('')}</ul>
          <div class="bar-v"></div>
        </div>
        <div class="bar-h"></div>
      </div>
      <div class="viewport">
        <div class="panel-menu">${buttons(['View', 'Shading', 'Lighting', 'Show', 'Renderer', 'Panels'])}</div>
        <div class="panel-tools">
          ${panelIcons.split(' ').map(i => i === '|' ? sep : i === '*' ? icon('dot', 'on') : icon(i)).join('')}
          <input value="0.00" aria-label="Exposure">${icon('ring')}<input value="1.00" aria-label="Gamma">${icon('tile', 'on')}
          ${select('View transform', 'sRGB gamma')}
        </div>
        ${mesh(picked ? 'smooth' : 'hard')}
      </div>
      <div class="attrs">${attributeEditor(step)}</div>
      <div class="side"><button>Channel Box / Layer Editor</button><button>Modeling Toolkit</button><button class="${picked ? 'active' : ''}">Attribute Editor</button><button>XGen</button><button>Human IK Character Controls</button></div>
    </div>
    <div class="timeline">
      <div class="ticks"><span class="now"></span>${Array.from({ length: 23 }, (_, i) => `<span>${(i + 1) * 5}</span>`).join('')}</div>
      <input value="1" aria-label="Current frame">
      <div class="play">${['prev', 'prev', 'prev key', 'back', 'play', 'next key', 'next', 'next'].map(p => {
        const [i, k] = p.split(' ');
        return `<button aria-label="${i}">${icon(i, k)}</button>`;
      }).join('')}</div>
    </div>
    <div class="range">
      <input value="1" aria-label="Start"><input value="1" aria-label="Range start">
      <div class="track"><div><b></b>&nbsp;1<em>120</em><b></b></div></div>
      <input value="120" aria-label="Range end"><input value="200" aria-label="End">${sep}
      <span class="note">No Character Set</span><span class="note">No Anim Layer</span>${sep}
      ${select('Frame rate', '24 fps')}
      ${icon('frame')}${icon('clap', 'orange')}${sep}${icon('ring', 'orange')}${icon('nodes', 'orange')}
    </div>
    <div class="command">
      <label><span>MEL</span><input></label>
      <input class="output" aria-label="Result" readonly>${icon('list')}
    </div>
    <div class="help">${picked ? 'Select Tool: select an object' : 'Insert Edge Loop Tool: Use LMB to select an edge. Shift to extend selection.'}</div>`;
}

document.querySelectorAll('.maya').forEach(render);
```
